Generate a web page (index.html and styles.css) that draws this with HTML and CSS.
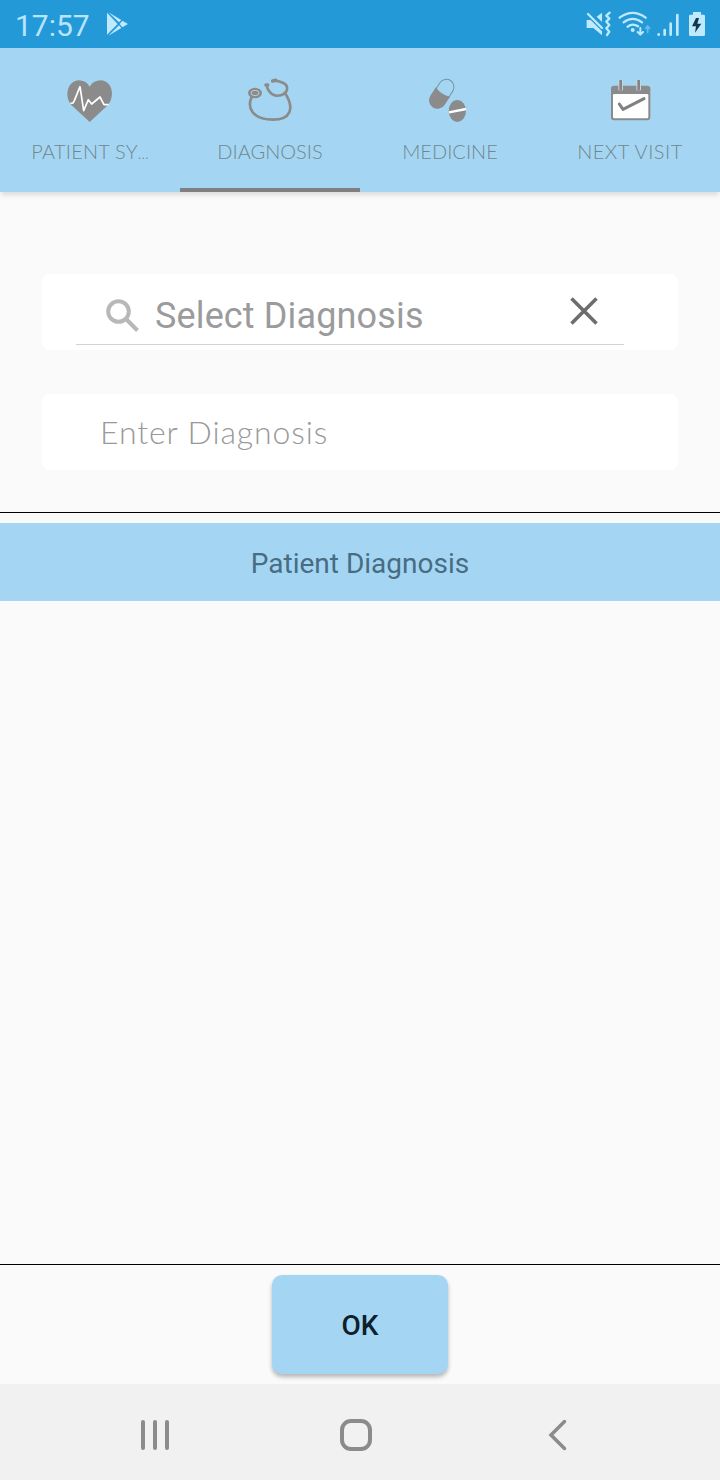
FILE: index.html
```html
<!DOCTYPE html>
<html lang="en">
<head>
<meta charset="utf-8">
<title>Diagnosis</title>
<link rel="stylesheet" href="styles.css">
</head>
<body>
<div class="screen">
  <header class="status">
    <span class="clock">17:57</span>
    <svg class="play" width="24" height="24" viewBox="318 36 72 72"><path class="pale" d="M321 38V104L353 72ZM325 37L357 67L364 60ZM325 107L364 84L357 76ZM367 62L359 72L367 82L384 72Z"/></svg>
    <svg class="indicators" width="126" height="32" viewBox="42 24 378 96">
      <path class="pale" d="M50 60H62L66 64L96 94V106L70 84H50ZM80 50L96 38V66Z"/>
      <path class="pale-line" stroke-width="7" d="M54 42L96 84"/>
      <path class="pale-line" stroke-width="7" d="M119 38L109 47L118 56L109 65L118 75L109 85L118 95L111 105"/>
      <path class="pale-line" stroke-width="7" d="M149 53Q188 24 227 53M161 67Q188 46 216 67M173 80Q188 68 204 79"/>
      <circle class="pale" cx="188" cy="90" r="6"/>
      <path class="pale-line" stroke-width="6" d="M211 84V103M203 96L211 104L219 96"/>
      <path class="pale-line dim" stroke-width="5" d="M233 97V79M227 85L233 78L239 85"/>
      <path class="pale-line" stroke-width="8" d="M266 103V104M284 90V104M302 71V104M322 45V104"/>
      <path class="pale" d="M369 36H393V44H401Q405 44 405 48V104Q405 108 401 108H361Q357 108 357 104V48Q357 44 361 44H369Z"/>
      <path class="bolt" d="M378 54L366 79H378L375 98L394 71H382L387 54Z"/>
    </svg>
  </header>
  <nav class="tabs">
    <div class="tab">
      <svg class="tab-icon" viewBox="138 33 144 144">
        <path class="gray" d="M209 171L154 120C132 94 142 48 176 46Q198 46 209 65Q220 46 243 46C277 48 286 94 264 120Z"/>
        <path class="white-line" d="M151 115L159 114L163 107L180 65L191 137L205 104L215 117L240 96L252 119L266 119"/>
      </svg>
      <span class="label label-patient">PATIENT SY<span class="dots">…</span></span>
    </div>
    <div class="tab active">
      <svg class="tab-icon" viewBox="138 33 144 144">
        <ellipse class="gray" cx="165" cy="84" rx="21" ry="16"/>
        <ellipse class="ring" cx="165" cy="84" rx="12" ry="8"/>
        <circle class="gray" cx="165" cy="84" r="5"/>
        <path class="tube" d="M155 96C140 129 158 164 219 164C270 164 286 132 255 84"/>
        <path class="tube" d="M200 61C205 86 224 96 242 91C263 85 269 64 250 54Q240 49 225 47"/>
        <path class="tube tip" d="M198 60L203 60M218 48L227 46"/>
      </svg>
      <span class="label label-diagnosis">DIAGNOSIS</span>
    </div>
    <div class="tab">
      <svg class="tab-icon" viewBox="138 33 144 144">
        <g transform="rotate(33 186 86)">
          <path class="capsule" d="M163 84V62A23 23 0 0 1 209 62V84"/>
          <path class="gray" d="M160 80Q186 91 211 80V110A25.500 25.500 0 0 1 160 110Z"/>
        </g>
        <ellipse class="gray" cx="232" cy="138" rx="26" ry="33"/>
        <path class="pill-line" d="M207 142L258 132"/>
      </svg>
      <span class="label label-medicine">MEDICINE</span>
    </div>
    <div class="tab">
      <svg class="tab-icon" viewBox="138 33 144 144">
        <rect class="gray" x="153" y="62" width="118" height="104" rx="9"/>
        <rect class="white" x="159" y="87" width="106" height="73" rx="4"/>
        <path class="hook-edge" d="M182 45V76M236 45V76"/>
        <path class="hook" d="M182 45V75M236 45V75"/>
        <path class="check" d="M178 117L189 133L252 101"/>
      </svg>
      <span class="label label-visit">NEXT VISIT</span>
    </div>
  </nav>
  <main class="content">
    <section class="form">
      <div class="field search">
        <div class="search-row">
          <svg class="magnifier" width="34" height="34" viewBox="0 0 34 34"><circle cx="12.500" cy="12.500" r="10.300"/><path d="M20 20L31.500 31.500"/></svg>
          <span class="search-text">Select Diagnosis</span>
          <svg class="clear" width="28" height="28" viewBox="0 0 28 28"><path d="M1.500 1.500L26.500 26.500M26.500 1.500L1.500 26.500"/></svg>
        </div>
      </div>
      <div class="field entry"><span class="entry-text">Enter Diagnosis</span></div>
    </section>
    <section class="list">
      <h1 class="list-title">Patient Diagnosis</h1>
    </section>
    <footer class="actions"><button class="ok">OK</button></footer>
  </main>
  <div class="system-nav">
    <svg width="480" height="70" viewBox="0 0 480 70"><path class="nav-line" d="M23 22V48M35 22V48M47 22V48"/><rect class="nav-line" x="222" y="21" width="28" height="28" rx="9"/><path class="nav-line chevron" d="M444.500 21.500L431 35L444.500 48.500"/></svg>
  </div>
</div>
</body>
</html>
```

FILE: styles.css
```css
body { margin: 0; }
.screen { width: 720px; height: 1480px; display: flex; flex-direction: column; background: #fafafa; font-family: Roboto, sans-serif; overflow: hidden; }
.status { height: 48px; display: flex; align-items: center; padding: 0 10px 0 15px; background: #2499d8; box-sizing: border-box; }
.clock { font-size: 30px; line-height: 48px; padding-top: 2px; height: 48px; box-sizing: border-box; color: #b9e5fb; width: 91px; }
.indicators { margin-left: auto; }
.pale { fill: #bfe9fc; }
.pale-line { fill: none; stroke: #bfe9fc; stroke-linecap: round; stroke-linejoin: round; }
.dim { opacity: 0.45; }
.bolt { fill: #12384f; }
.tabs { height: 144px; display: grid; grid-template-columns: repeat(4, 180px); background: #a4d6f3; box-shadow: 0 4px 5px -1px rgba(0, 0, 0, 0.12); }
.tab { display: flex; flex-direction: column; align-items: center; padding-top: 28px; border-bottom: 4px solid transparent; box-sizing: border-box; height: 144px; }
.active { border-bottom-color: #808080; }
.tab-icon { width: 48px; height: 48px; overflow: visible; }
.label { font-family: Lato, sans-serif; font-weight: 300; font-size: 20px; line-height: 24px; margin-top: 15px; color: #71868f; white-space: nowrap; }
.label-patient { letter-spacing: 0.2px; }
.dots { font-size: 15px; letter-spacing: 0; }
.label-visit { letter-spacing: 0.5px; }
.gray { fill: #8b8b8b; }
.white { fill: #fff; }
.white-line { fill: none; stroke: #fff; stroke-width: 5; stroke-linejoin: round; }
.ring { fill: none; stroke: #b9cbd5; stroke-width: 3; }
.tube { fill: none; stroke: #8b8b8b; stroke-width: 8; stroke-linecap: round; }
.tip { stroke-width: 11; }
.capsule { fill: none; stroke: #7e929d; stroke-width: 3; }
.pill-line { fill: none; stroke: #fff; stroke-width: 7; }
.hook-edge { stroke: #c3d5df; stroke-width: 14; }
.hook { stroke: #858585; stroke-width: 8; }
.check { fill: none; stroke: #808080; stroke-width: 9; stroke-linecap: round; stroke-linejoin: round; }
.content { height: 1192px; display: flex; flex-direction: column; }
.form { height: 321px; box-sizing: border-box; padding: 82px 42px 0; border-bottom: 1px solid #000; display: flex; flex-direction: column; gap: 44px; }
.field { height: 76px; border-radius: 8px; background: #fff; box-sizing: border-box; }
.search { padding: 0 54px 5px 34px; }
.search-row { height: 71px; box-sizing: border-box; border-bottom: 1px solid #d2d2d2; display: flex; align-items: center; padding: 14px 26px 0 30px; }
.magnifier { fill: none; stroke: #b8b8b8; stroke-width: 4; }
.search-text { font-size: 36px; line-height: 42px; color: #9b9b9b; margin-left: 15px; letter-spacing: 0.14px; }
.clear { margin: 0 0 10px auto; fill: none; stroke: #6d6d6d; stroke-width: 3.6; }
.entry { padding-left: 58px; }
.entry-text { display: block; font-family: Lato, sans-serif; font-weight: 300; font-size: 32px; line-height: 75px; color: #999; letter-spacing: 0.88px; }
.list { flex: 1; padding-top: 10px; border-bottom: 1px solid #000; }
.list-title { margin: 0; height: 78px; line-height: 82px; background: #a4d6f3; color: #486c82; text-align: center; font-size: 28px; font-weight: 400; }
.actions { height: 119px; box-sizing: border-box; padding-top: 10px; display: flex; justify-content: center; align-items: flex-start; }
.ok { width: 176px; height: 99px; padding: 2px 0 0; border: 0; border-radius: 10px; background: #a4d6f3; color: #0d202b; font: 500 28px Roboto, sans-serif; box-shadow: 0 3px 4px rgba(0, 0, 0, 0.28); }
.system-nav { height: 96px; box-sizing: border-box; padding: 16px 0 0 120px; background: #f1f1f1; }
.nav-line { fill: none; stroke: #8b8b8b; stroke-width: 4; stroke-linecap: round; }
.chevron { stroke-width: 3.5; stroke-linejoin: miter; }
```
